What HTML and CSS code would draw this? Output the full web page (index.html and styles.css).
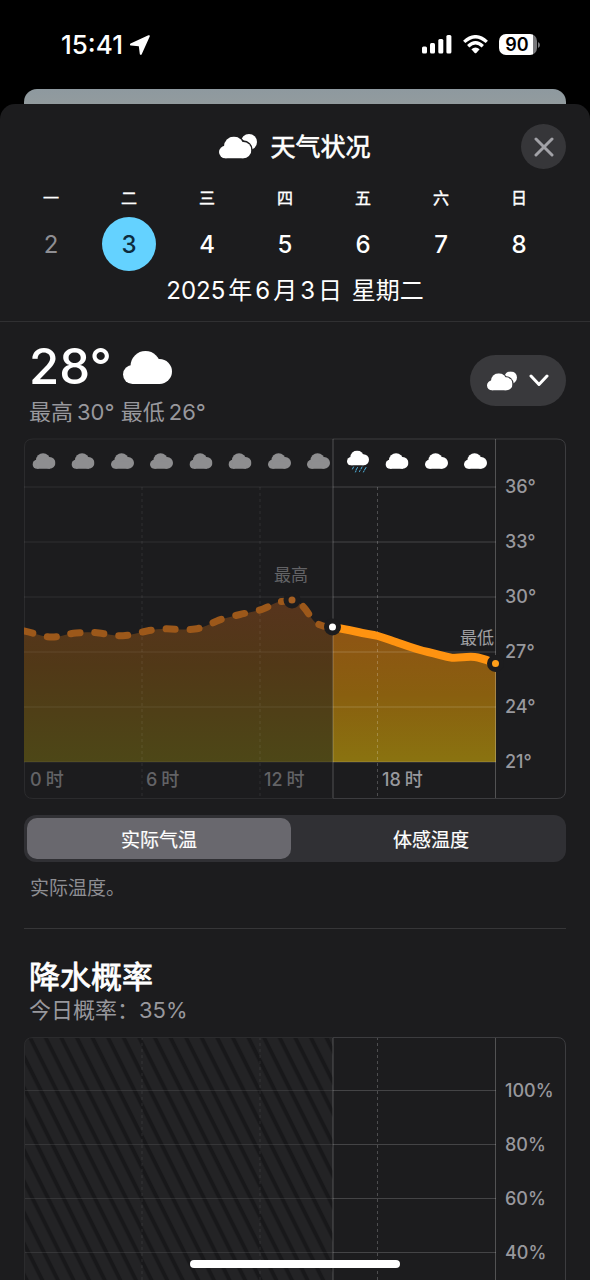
FILE: index.html
```html
<!DOCTYPE html>
<html lang="zh-CN">
<head>
<meta charset="utf-8">
<meta name="viewport" content="width=device-width, initial-scale=1">
<title>天气状况</title>
<link rel="stylesheet" href="styles.css">
</head>
<body>
<svg class="defs" aria-hidden="true">
  <defs>
    <symbol id="cloud" viewBox="0 0 49 33">
      <circle cx="9.500" cy="23.500" r="9.500"/>
      <circle cx="22.500" cy="15" r="15"/>
      <circle cx="36.500" cy="20.500" r="12.500"/>
      <path d="M9.500 17H37V33H9.500Z"/>
    </symbol>
    <mask id="cloud-gap" maskUnits="userSpaceOnUse" x="0" y="0" width="40" height="26">
      <rect width="40" height="26" fill="#fff"/>
      <g fill="#000" stroke="#000" stroke-width="4.600" transform="translate(0 2.600) scale(.66)">
        <circle cx="9.500" cy="23.500" r="9.500"/>
        <circle cx="22.500" cy="15" r="15"/>
        <circle cx="36.500" cy="20.500" r="12.500"/>
      </g>
    </mask>
    <symbol id="conditions" viewBox="0 0 38 25">
      <circle cx="30" cy="8" r="8" mask="url(#cloud-gap)"/>
      <use href="#cloud" x="0" y="2.600" width="32.400" height="21.800"/>
    </symbol>
  </defs>
</svg>

<div class="status">
  <div class="status-left">
    <time class="clock">15:41</time>
    <svg class="arrow" viewBox="0 0 20 20" aria-hidden="true"><path d="M18.800 1.200 1 9.500 8.900 10.200Q9.700 10.300 9.800 11L10.800 18.800Z"/></svg>
  </div>
  <div class="status-right">
    <svg class="signal" viewBox="0 0 30 19" aria-hidden="true"><rect x="0" y="11.500" width="5" height="7" rx="1.500"/><rect x="8" y="8" width="5" height="10.500" rx="1.500"/><rect x="16.300" y="4" width="5" height="14.500" rx="1.500"/><rect x="24.400" y="0" width="5" height="18.500" rx="1.500"/></svg>
    <svg class="wifi" viewBox="0 0 25 19" aria-hidden="true"><g fill="none" stroke="#fff" stroke-width="3.300"><path d="M1.200 6.900Q12.500-3.500 23.800 6.900"/><path d="M5.200 11.200Q12.500 4.400 19.800 11.200"/></g><path d="M8.400 14.300Q12.500 10.800 16.600 14.300L13.300 18Q12.500 18.700 11.700 18Z" fill="#fff"/></svg>
    <div class="battery"><span class="battery-level">90</span><svg class="battery-tip" viewBox="0 0 2 6" aria-hidden="true"><path d="M0 0Q2 1 2 3T0 6Z"/></svg></div>
  </div>
</div>

<div class="card-behind"></div>

<main class="sheet">
  <header class="top">
    <div class="bar">
      <h1 class="title"><svg class="title-icon" aria-hidden="true"><use href="#conditions"/></svg>天气状况</h1>
      <button class="close" type="button" aria-label="关闭"><svg viewBox="0 0 20 20" aria-hidden="true"><path d="M2 2 18 18M18 2 2 18"/></svg></button>
    </div>
    <div class="week">
      <div class="day"><span class="weekday">一</span><button class="date past" type="button">2</button></div>
      <div class="day"><span class="weekday">二</span><button class="date selected" type="button">3</button></div>
      <div class="day"><span class="weekday">三</span><button class="date" type="button">4</button></div>
      <div class="day"><span class="weekday">四</span><button class="date" type="button">5</button></div>
      <div class="day"><span class="weekday">五</span><button class="date" type="button">6</button></div>
      <div class="day"><span class="weekday">六</span><button class="date" type="button">7</button></div>
      <div class="day"><span class="weekday">日</span><button class="date" type="button">8</button></div>
    </div>
    <p class="full-date">2025<span class="cjk">年</span>6<span class="cjk">月</span>3<span class="cjk">日</span> 星期二</p>
  </header>

  <section class="section">
    <div class="summary">
      <div>
        <p class="now">28°<svg class="now-icon" aria-hidden="true"><use href="#cloud"/></svg></p>
        <p class="sub"><span class="label">最高</span>30° <span class="label">最低</span>26°</p>
      </div>
      <button class="picker" type="button" aria-label="选择天气状况">
        <svg class="picker-icon" aria-hidden="true"><use href="#conditions"/></svg>
        <svg class="chevron" viewBox="0 0 20 13" aria-hidden="true"><path d="M2 2 10 10.500 18 2"/></svg>
      </button>
    </div>

    <svg class="chart" viewBox="0 0 542 362" role="img" aria-label="气温">
      <defs>
        <linearGradient id="past-fill" gradientUnits="userSpaceOnUse" x1="0" y1="162" x2="0" y2="324">
          <stop offset="0" stop-color="#57341d"/><stop offset=".4" stop-color="#513817"/><stop offset="1" stop-color="#4d4717"/>
        </linearGradient>
        <linearGradient id="next-fill" gradientUnits="userSpaceOnUse" x1="0" y1="189" x2="0" y2="324">
          <stop offset="0" stop-color="#8e5414"/><stop offset=".5" stop-color="#895f0f"/><stop offset="1" stop-color="#8a7310"/>
        </linearGradient>
        <clipPath id="plot"><rect x="0" y="0" width="472" height="362"/></clipPath>
      </defs>
      <path class="frame-dim" d="M309 1H9Q.5 1 .5 9V352Q.5 360.500 9 360.500H309"/>
      <path class="frame" d="M309 1H533Q541.500 1 541.500 9V352Q541.500 360.500 533 360.500H309"/>
      <g clip-path="url(#plot)">
        <path fill="url(#past-fill)" d="M0 193C10 195 19 199 28 199C37 199 43 195.700 52 195S67 194 75 195S91 198 99 197.700S115 194.500 123 193S139 190.500 147 191S163 192 171 191S186 186 193 183S208 178.500 216 176.500S232 173.500 239 171S250 164 258 163.500S264 161 268 162S277 165 282 172S289 184 295 186.500S304 189 309 189V324H0Z"/>
        <path fill="url(#next-fill)" d="M309 189C317 190.500 326 192 334 194S347 196 354 198S366 202 372 204S392 211.500 404 214S420 219 428 219.700S445 217.500 454 219.500S466 223 472 226V324H309Z"/>
      </g>
      <g class="grid-past"><path d="M0 49H309M0 104H309M0 159H309M0 214H309M0 269H309M0 324H309"/><path class="dotted" d="M118 49V360M236 49V360"/></g>
      <g class="grid-next"><path d="M309 49H472M309 104H472M309 159H472M309 214H472M309 269H472M309 324H472"/><path class="solid" d="M309 1V360M471.500 1V360"/><path class="dotted" d="M353.500 49V360"/></g>

      <g fill="#8e8e90">
        <use href="#cloud" x="8.500" y="15" width="23" height="16"/>
        <use href="#cloud" x="47.500" y="15" width="23" height="16"/>
        <use href="#cloud" x="87" y="15" width="23" height="16"/>
        <use href="#cloud" x="126" y="15" width="23" height="16"/>
        <use href="#cloud" x="165.500" y="15" width="23" height="16"/>
        <use href="#cloud" x="204.500" y="15" width="23" height="16"/>
        <use href="#cloud" x="244" y="15" width="23" height="16"/>
        <use href="#cloud" x="283" y="15" width="23" height="16"/>
      </g>
      <g fill="#fff">
        <use href="#cloud" x="323" y="12.500" width="22" height="15"/>
        <use href="#cloud" x="361.500" y="15" width="23" height="16"/>
        <use href="#cloud" x="401" y="15" width="23" height="16"/>
        <use href="#cloud" x="440" y="15" width="23" height="16"/>
      </g>
      <path class="rain" d="M329.500 29 328.500 31M333.500 29.500 332 32M338 29 337 31M342 29.500 340.500 32M332 33 331.500 34M336 32.500 335.500 33.500M340 33 339.500 34"/>

      <g clip-path="url(#plot)">
        <path class="line-past" d="M0 193C10 195 19 199 28 199C37 199 43 195.700 52 195S67 194 75 195S91 198 99 197.700S115 194.500 123 193S139 190.500 147 191S163 192 171 191S186 186 193 183S208 178.500 216 176.500S232 173.500 239 171S250 164 258 163.500S264 161 268 162S277 165 282 172S289 184 295 186.500S304 189 309 189"/>
        <path class="line-next" d="M309 189C317 190.500 326 192 334 194S347 196 354 198S366 202 372 204S392 211.500 404 214S420 219 428 219.700S445 217.500 454 219.500S466 223 472 226"/>
      </g>
      <g class="marker">
        <circle cx="268" cy="162" r="6" fill="#a55f22"/>
        <circle cx="308.500" cy="189" r="6" fill="#fff"/>
        <circle cx="471.500" cy="225.500" r="6" fill="#ff9f1a"/>
      </g>
      <text class="note dim" x="267" y="143" text-anchor="middle">最高</text>
      <text class="note" x="470" y="206" text-anchor="end">最低</text>
      <g class="axis">
        <text x="481" y="55">36°</text><text x="481" y="110">33°</text><text x="481" y="165">30°</text>
        <text x="481" y="220">27°</text><text x="481" y="275">24°</text><text x="481" y="330">21°</text>
        <text x="358" y="348">18<tspan dx="4">时</tspan></text>
      </g>
      <g class="axis dim">
        <text x="6" y="348">0<tspan dx="4">时</tspan></text><text x="122" y="348">6<tspan dx="4">时</tspan></text><text x="240" y="348">12<tspan dx="4">时</tspan></text>
      </g>
    </svg>

    <div class="segmented">
      <label class="segment"><input type="radio" name="temperature" checked>实际气温</label>
      <label class="segment"><input type="radio" name="temperature">体感温度</label>
    </div>
    <p class="caption">实际温度。</p>
  </section>

  <section class="section rain-section">
    <h2 class="heading">降水概率</h2>
    <p class="sub">今日概率：35%</p>
    <svg class="chart" viewBox="0 0 542 362" role="img" aria-label="降水概率">
      <defs>
        <pattern id="stripes" width="15.600" height="40" patternUnits="userSpaceOnUse" patternTransform="skewX(26.600)">
          <rect width="15.600" height="40" fill="#232325"/><rect x="3.500" width="4.500" height="40" fill="#18181a"/>
        </pattern>
      </defs>
      <path fill="url(#stripes)" d="M309 0H9Q0 0 0 9V352Q0 361 9 361H309Z"/>
      <g class="grid-past"><path d="M0 53.500H309M0 107.500H309M0 161.500H309M0 215.500H309M0 269.500H309M0 323.500H309"/><path class="dotted" d="M118 0V360M236 0V360"/></g>
      <g class="grid-next"><path d="M309 53.500H472M309 107.500H472M309 161.500H472M309 215.500H472M309 269.500H472M309 323.500H472"/><path class="solid" d="M309 0V360M471.500 0V360"/><path class="dotted" d="M353.500 0V360"/></g>
      <path class="frame-dim" d="M309 .5H9Q.5 .5 .5 9V352Q.5 360.500 9 360.500H309"/>
      <path class="frame" d="M309 .5H533Q541.500 .5 541.500 9V352Q541.500 360.500 533 360.500H309"/>
      <g class="axis">
        <text x="481" y="60">100%</text><text x="481" y="114">80%</text><text x="481" y="168">60%</text><text x="481" y="222">40%</text>
      </g>
    </svg>
  </section>
</main>
<div class="home-indicator"></div>
</body>
</html>
```
FILE: styles.css
```css
* { box-sizing: border-box; }

body {
  margin: 0;
  height: 100vh;
  overflow: hidden;
  display: flex;
  flex-direction: column;
  background: #000;
  color: #fff;
  font-family: Inter, "Noto Sans CJK SC", sans-serif;
}

h1, h2, p { margin: 0; }

button {
  border: 0;
  padding: 0;
  background: none;
  color: inherit;
  font: inherit;
}

.defs { position: absolute; width: 0; height: 0; }

.status {
  flex: none;
  height: 89px;
  padding: 0 50px 0 61px;
  display: flex;
  justify-content: space-between;
  align-items: center;
}
.status-left, .status-right { display: flex; align-items: center; }
.status-left { gap: 7px; }
.status-right { gap: 11px; }
.clock { font-size: 26px; font-weight: 500; line-height: 30px; }
.arrow { width: 20px; height: 20px; fill: #fff; stroke: #fff; stroke-width: 2; stroke-linejoin: round; }
.signal { width: 30px; height: 19px; fill: #fff; }
.wifi { width: 25px; height: 19px; }
.battery { display: flex; align-items: center; gap: 1px; }
.battery-level {
  width: 38px;
  height: 21px;
  border-radius: 7px;
  background: linear-gradient(90deg, #fff 90%, #77777a 90%);
  color: #000;
  font-size: 18px;
  font-weight: 600;
  line-height: 21px;
  text-align: center;
  padding-right: 2px;
}
.battery-tip { width: 2px; height: 6px; fill: #77777a; }

.card-behind {
  flex: none;
  height: 15px;
  margin: 0 24px;
  border-radius: 13px 13px 0 0;
  background: linear-gradient(#8e999f, #929b9e);
}

.sheet {
  flex: 1;
  min-height: 0;
  overflow: hidden;
  border-radius: 15px 15px 0 0;
  background: #1c1c1e;
}

.top { padding: 20px 0 15px; border-bottom: 1px solid #303032; }
.bar {
  padding: 0 24px;
  display: grid;
  grid-template-columns: 1fr auto 1fr;
  align-items: center;
}
.title {
  grid-column: 2;
  display: flex;
  align-items: center;
  gap: 13px;
  font-size: 25px;
  font-weight: 400;
  line-height: 36px;
  -webkit-text-stroke: 0.6px #fff;
}
.title-icon { width: 38px; height: 25px; fill: #fff; }
.close {
  justify-self: end;
  width: 45px;
  height: 45px;
  border-radius: 50%;
  background: #363639;
  display: grid;
  place-items: center;
}
.close svg { width: 20px; height: 20px; fill: none; stroke: #a2a2a7; stroke-width: 3; stroke-linecap: round; }

.week {
  margin-top: 18px;
  padding: 0 32px 0 12px;
  display: grid;
  grid-template-columns: repeat(7, 1fr);
}
.day { display: flex; flex-direction: column; align-items: center; gap: 8px; }
.weekday { font-size: 16px; line-height: 22px; -webkit-text-stroke: 0.4px #fff; }
.date { width: 54px; height: 54px; border-radius: 50%; font-size: 24px; font-weight: 500; }
.date.past { color: #8e8e93; font-weight: 400; }
.date.selected { background: #64d2ff; color: #0d2c3d; }
.full-date { margin-top: 5px; font-size: 24px; line-height: 30px; text-align: center; }
.cjk { margin: 0 3px; }

.section { padding: 0 24px; }
.summary {
  padding: 17px 0 12px 5px;
  display: flex;
  justify-content: space-between;
  align-items: flex-start;
}
.now { display: flex; align-items: center; gap: 11px; font-size: 49px; font-weight: 500; line-height: 56px; }
.now-icon { width: 49px; height: 33px; fill: #fff; }
.sub { font-size: 22px; line-height: 28px; color: #98989d; }
.now + .sub { margin-top: 3px; }
.label { margin-right: 4px; }
.picker {
  width: 96px;
  height: 51px;
  margin-top: 16px;
  border-radius: 26px;
  background: #39393c;
  display: flex;
  align-items: center;
  justify-content: center;
  gap: 12px;
}
.picker-icon { width: 30px; height: 20px; fill: #fff; }
.chevron { width: 20px; height: 13px; fill: none; stroke: #fff; stroke-width: 3; stroke-linecap: round; stroke-linejoin: round; }

.chart { display: block; width: 100%; height: auto; overflow: visible; }
.grid-past path, .grid-next path { fill: none; stroke: #fff; stroke-width: 1; }
.grid-past path { stroke-opacity: .09; }
.grid-next path { stroke-opacity: .18; }
.grid-next .solid { stroke-opacity: .24; }
.grid-past .dotted, .grid-next .dotted { stroke-dasharray: 3 3; }
.grid-next .dotted { stroke-opacity: .22; }
.frame-dim, .frame { fill: none; stroke: #2b2b2d; }
.frame { stroke: #3c3c3f; }
.line-past { fill: none; stroke: #9c581a; stroke-width: 7; stroke-linecap: round; stroke-dasharray: 9 15; }
.line-next { fill: none; stroke: #ff9310; stroke-width: 8; }
.marker circle { stroke: #1c1c1e; stroke-width: 5; }
.rain { fill: none; stroke: #4fb4e0; stroke-width: 1; stroke-linecap: round; }
.axis text { font-size: 18px; font-weight: 500; fill: #98989d; }
.note { font-size: 17px; fill: #a0a0a4; }
.axis.dim text, .note.dim { fill: #636366; }

.segmented {
  margin-top: 15px;
  height: 47px;
  padding: 3px;
  border-radius: 12px;
  background: #303034;
  display: grid;
  grid-template-columns: 1fr 1fr;
  gap: 8px;
}
.segment {
  border-radius: 10px;
  display: flex;
  align-items: center;
  justify-content: center;
  font-size: 19px;
  -webkit-text-stroke: 0.2px #fff;
}
.segment input { appearance: none; position: absolute; margin: 0; }
.segment:has(:checked) { background: #69686e; }
.caption { margin: 14px 0 26px; padding-left: 6px; font-size: 19px; line-height: 26px; color: #8e8e93; }

.rain-section::before { content: ""; display: block; height: 1px; background: #363638; }
.heading { padding: 28px 0 0 5px; font-size: 31px; font-weight: 400; line-height: 39px; -webkit-text-stroke: 0.8px #fff; }
.rain-section .sub { padding-left: 5px; margin-bottom: 13px; }

.home-indicator {
  position: fixed;
  left: 50%;
  bottom: 12px;
  width: 210px;
  height: 8px;
  margin-left: -105px;
  border-radius: 4px;
  background: #fff;
}
```
